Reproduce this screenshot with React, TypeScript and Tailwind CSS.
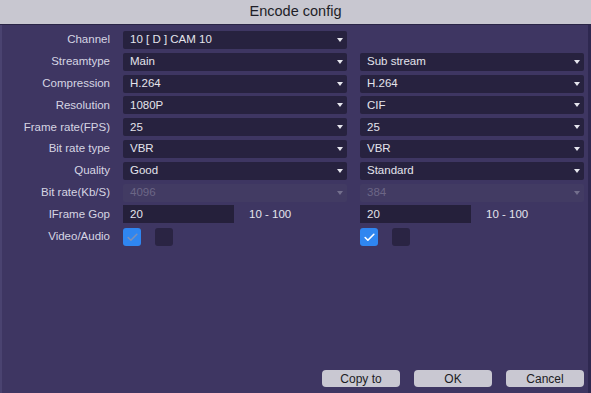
import { Check } from "lucide-react";

type Row =
  | { kind: "select"; label: string; left?: string; right?: string; disabled?: boolean }
  | { kind: "gop"; label: string }
  | { kind: "check"; label: string };

const rows: Row[] = [
  { kind: "select", label: "Channel", left: "10 [ D ] CAM 10" },
  { kind: "select", label: "Streamtype", left: "Main", right: "Sub stream" },
  { kind: "select", label: "Compression", left: "H.264", right: "H.264" },
  { kind: "select", label: "Resolution", left: "1080P", right: "CIF" },
  { kind: "select", label: "Frame rate(FPS)", left: "25", right: "25" },
  { kind: "select", label: "Bit rate type", left: "VBR", right: "VBR" },
  { kind: "select", label: "Quality", left: "Good", right: "Standard" },
  { kind: "select", label: "Bit rate(Kb/S)", left: "4096", right: "384", disabled: true },
  { kind: "gop", label: "IFrame Gop" },
  { kind: "check", label: "Video/Audio" },
];

function Arrow({ dim }: { dim?: boolean }) {
  return (
    <svg width="6" height="4" viewBox="0 0 6 4" className={dim ? "opacity-30" : ""}>
      <path d="M0 0h6L3 4z" fill="#e6e6ee" />
    </svg>
  );
}

function Select({ value, disabled }: { value: string; disabled?: boolean }) {
  return (
    <div
      className={`flex h-[18px] w-[224px] items-center justify-between rounded-[2px] pl-[7px] pr-[4px] ${
        disabled ? "bg-[#423b63] text-[#6c6686]" : "bg-[#27223f] text-[#e4e4ec]"
      }`}
    >
      <span>{value}</span>
      <Arrow dim={disabled} />
    </div>
  );
}

function Gop() {
  return (
    <div className="flex w-[224px] items-center">
      <div className="flex h-[18px] w-[111px] items-center bg-[#25203b] pl-[7px] text-[#e4e4ec]">20</div>
      <span className="ml-[15px] text-[#e4e4ec]">10 - 100</span>
    </div>
  );
}

function Checks({ bright }: { bright?: boolean }) {
  return (
    <div className="flex w-[224px] items-center gap-[14px]">
      <div className="flex h-[18px] w-[18px] items-center justify-center rounded-[3px] bg-[#2f86f0]">
        <Check size={13} strokeWidth={3} color={bright ? "#ffffff" : "#7d90b8"} />
      </div>
      <div className="h-[18px] w-[18px] rounded-[3px] bg-[#2a2443]" />
    </div>
  );
}

export default function App() {
  return (
    <div
      className="flex h-[393px] w-[591px] flex-col overflow-hidden bg-[#3e3662] text-[11.5px]"
      style={{ fontFamily: '"Liberation Sans", Arial, sans-serif' }}
    >
      <div className="flex h-[25px] shrink-0 items-center justify-center border-b border-[#2a2546] bg-[#c8c7d0] text-[14.5px] text-[#1e1e28]">
        Encode config
      </div>
      <div className="flex flex-1 flex-col border-l-2 border-r-[3px] border-l-[#4a4370] border-r-[#2e2850]">
        <div className="mt-[6px] flex flex-col gap-[3.8px]">
          {rows.map((r) => (
            <div key={r.label} className="flex h-[18px] items-center">
              <div className="w-[108px] text-right text-[#d6d5e2]">{r.label}</div>
              <div className="ml-[13px] flex gap-[13px]">
                {r.kind === "select" && (
                  <>
                    <Select value={r.left ?? ""} disabled={r.disabled} />
                    {r.right && <Select value={r.right} disabled={r.disabled} />}
                  </>
                )}
                {r.kind === "gop" && (
                  <>
                    <Gop />
                    <Gop />
                  </>
                )}
                {r.kind === "check" && (
                  <div className="mt-[2px] flex gap-[13px]">
                    <Checks />
                    <Checks bright />
                  </div>
                )}
              </div>
            </div>
          ))}
        </div>
        <div className="mt-auto mb-[6px] flex justify-end gap-[14px] pr-[4px]">
          {["Copy to", "OK", "Cancel"].map((b) => (
            <button
              key={b}
              className="flex h-[17px] w-[78px] items-center justify-center rounded-[4px] bg-[#c9c8d2] text-[12px] text-[#1c1c24]"
            >
              {b}
            </button>
          ))}
        </div>
      </div>
    </div>
  );
}
